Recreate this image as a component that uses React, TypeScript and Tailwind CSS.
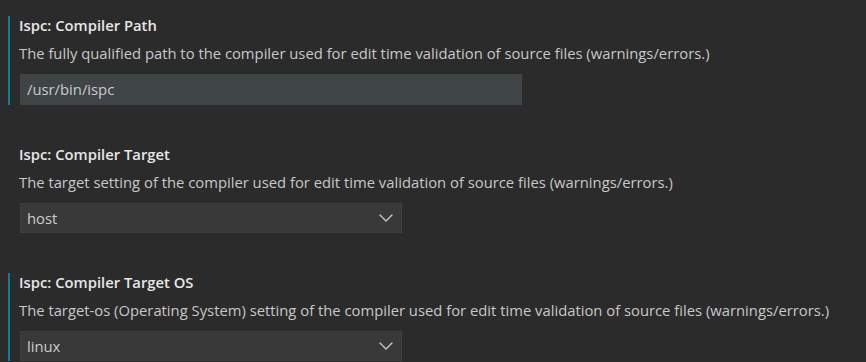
import { ChevronDown } from "lucide-react";

type Item = {
  category: string;
  name: string;
  description: string;
  value: string;
  kind: "text" | "select";
  modified: boolean;
};

const items: Item[] = [
  {
    category: "Ispc: ",
    name: "Compiler Path",
    description:
      "The fully qualified path to the compiler used for edit time validation of source files (warnings/errors.)",
    value: "/usr/bin/ispc",
    kind: "text",
    modified: true,
  },
  {
    category: "Ispc: ",
    name: "Compiler Target",
    description:
      "The target setting of the compiler used for edit time validation of source files (warnings/errors.)",
    value: "host",
    kind: "select",
    modified: false,
  },
  {
    category: "Ispc: ",
    name: "Compiler Target OS",
    description:
      "The target-os (Operating System) setting of the compiler used for edit time validation of source files (warnings/errors.)",
    value: "linux",
    kind: "select",
    modified: true,
  },
];

function Setting({ item }: { item: Item }) {
  return (
    <div
      className={
        item.modified
          ? "ml-2 border-l-2 border-[#0c7d9d] pl-[9px]"
          : "ml-2 border-l-2 border-transparent pl-[9px]"
      }
    >
      <div className="leading-[18px] font-semibold text-[#e7e7e7]">
        <span>{item.category}</span>
        <span>{item.name}</span>
      </div>
      <div className="mt-[9px] leading-[20px] text-[#c8c8c8]">{item.description}</div>
      {item.kind === "text" ? (
        <div className="mt-[11px] ml-px flex h-[31px] w-[502px] items-center bg-[#3f4446] pl-[7px] text-[#cccccc]">
          {item.value}
        </div>
      ) : (
        <div className="mt-[11px] ml-px flex h-[30px] w-[382px] items-center justify-between border border-[#3e3e3e] bg-[#393939] pl-[6px] pr-[3px] text-[#cccccc]">
          <span>{item.value}</span>
          <ChevronDown size={24} strokeWidth={1.4} className="text-[#c5c5c5]" />
        </div>
      )}
    </div>
  );
}

export default function App() {
  return (
    <div className="h-[362px] w-[866px] overflow-hidden bg-[#2b2b2b] pt-4 font-['Open_Sans','Noto_Sans',sans-serif] text-[14.8px]">
      <div className="flex flex-col gap-10">
        {items.map((item) => (
          <Setting key={item.name} item={item} />
        ))}
      </div>
    </div>
  );
}
